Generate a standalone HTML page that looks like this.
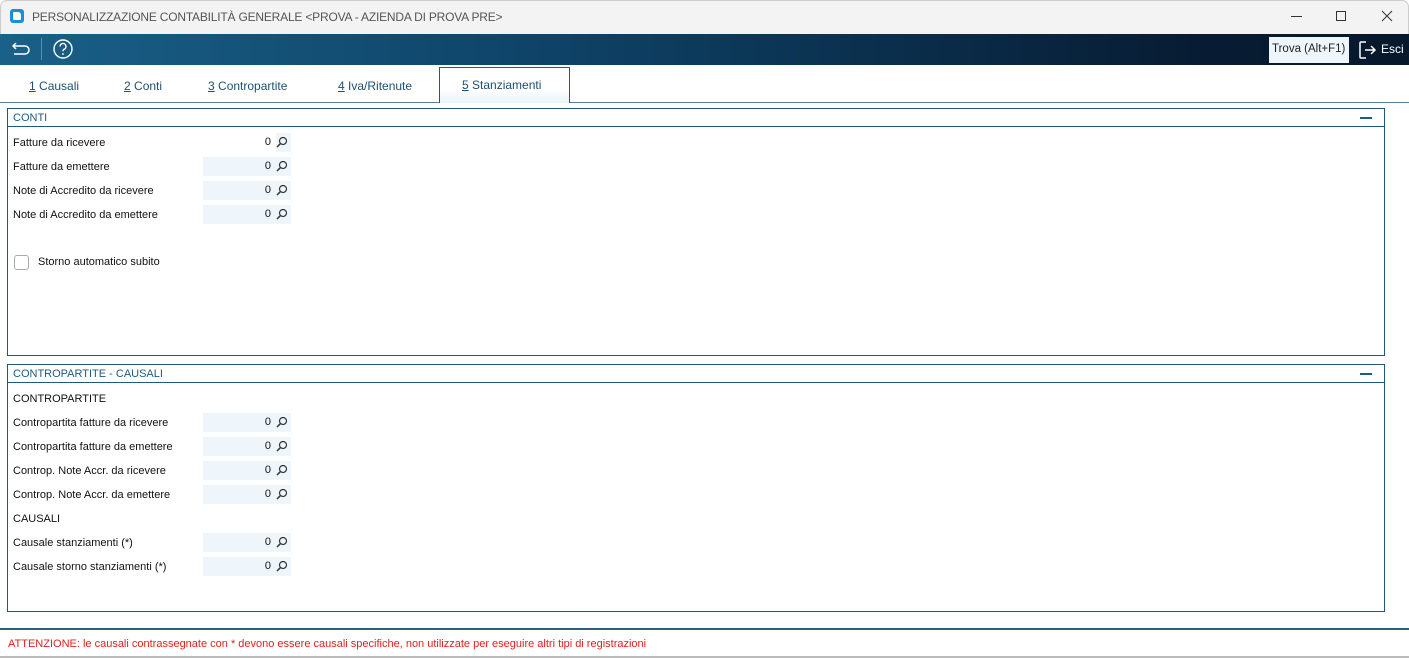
<!DOCTYPE html><html><head><meta charset="utf-8"><style>
*{margin:0;padding:0;box-sizing:border-box}
body{width:1409px;height:658px;overflow:hidden;background:#fff;font-family:"Liberation Sans",sans-serif;font-size:11px;color:#111;position:relative}
.a{position:absolute}
.title{left:0;top:0;width:1409px;height:34px;background:#f3f3f3;border:1px solid #ccc;border-bottom:none;border-radius:7px 7px 0 0}
.tb{left:0;top:34px;width:1409px;height:31px;background:linear-gradient(90deg,#1a6088 0%,#0e4266 40%,#071c33 85%,#06182b 100%)}
.tab{top:79px;font-size:12px;color:#1d4f73}
.grp{border:1px solid #1f5a7a;left:7px;width:1378px}
.gh{position:absolute;left:0;top:0;right:0;height:18px;border-bottom:1px solid #1f5a7a;color:#1d5a86;font-size:11px;padding:3px 0 0 5px}
.gh:after{content:"";position:absolute;right:12px;top:8px;width:12px;height:2px;background:#1d5a86}
.lbl{left:13px}
.fld{left:203px;width:88px;height:19px;background:#eef6fc}
.fld span{position:absolute;right:20px;top:3px}
.fld svg{position:absolute;right:3px;top:3px}
</style></head><body>
<div class="a title"></div>
<div class="a" style="left:10px;top:9px;width:14px;height:14px;background:#1a8fd8;border-radius:3px"><div style="position:absolute;left:3px;top:3px;width:8px;height:8px;background:#fff;border-radius:1px 3px 1px 1px"></div></div>
<div class="a" style="left:32px;top:10px;font-size:12px;color:#555;letter-spacing:-0.2px">PERSONALIZZAZIONE CONTABILITÀ GENERALE &lt;PROVA - AZIENDA DI PROVA PRE&gt;</div>
<div class="a" style="left:1291px;top:16px;width:11px;height:1px;background:#333"></div>
<div class="a" style="left:1336px;top:11px;width:10px;height:10px;border:1px solid #333"></div>
<svg class="a" style="left:1381px;top:10px" width="12" height="12"><path d="M1 1L11 11M11 1L1 11" stroke="#333" stroke-width="1"/></svg>
<div class="a tb"></div>
<svg class="a" style="left:11px;top:39px" width="22" height="20"><path d="M5 4L2 7L5 10M2 7H14a4 4 0 0 1 0 8H3" fill="none" stroke="#fff" stroke-width="1.5"/></svg>
<div class="a" style="left:41px;top:38px;width:1px;height:22px;background:#5f8fb0"></div>
<svg class="a" style="left:52px;top:38px" width="22" height="22"><circle cx="11" cy="11" r="9" fill="none" stroke="#fff" stroke-width="1.4"/><path d="M8 8.5a3 3 0 1 1 4 2.8c-1 .4-1 1-1 2" fill="none" stroke="#fff" stroke-width="1.4"/><circle cx="11" cy="16" r="0.9" fill="#fff"/></svg>
<div class="a" style="left:1269px;top:37px;width:80px;height:26px;background:#eef6fc;font-size:11.5px;padding:6px 0 0 3px;color:#222">Trova (Alt+F1)</div>
<svg class="a" style="left:1358px;top:40px" width="20" height="20"><path d="M8 2H3a1 1 0 0 0-1 1V17a1 1 0 0 0 1 1H8M7 10H17M13 6L17 10L13 14" fill="none" stroke="#fff" stroke-width="1.5"/></svg>
<div class="a" style="left:1381px;top:42px;color:#fff;font-size:12px">Esci</div>
<div class="a" style="left:0;top:102px;width:1409px;height:1px;background:#5d7f99"></div>
<div class="a" style="left:439px;top:67px;width:131px;height:36px;border:1px solid #1f5a7a;border-bottom:none;background:linear-gradient(#fff 60%,#e8f4fc)"></div>
<div class="a tab" style="left:29px"><u>1</u> Causali</div>
<div class="a tab" style="left:124px"><u>2</u> Conti</div>
<div class="a tab" style="left:208px"><u>3</u> Contropartite</div>
<div class="a tab" style="left:338px"><u>4</u> Iva/Ritenute</div>
<div class="a tab" style="left:462px;top:78px"><u>5</u> Stanziamenti</div>

<div class="a grp" style="top:108px;height:248px"><div class="gh">CONTI</div></div>
<div class="a grp" style="top:364px;height:248px"><div class="gh">CONTROPARTITE - CAUSALI</div></div>

<div id="f"></div>
<div class="a" style="left:14px;top:255px;width:15px;height:15px;border:1px solid #aaa;border-radius:3px"></div>
<div class="a" style="left:38px;top:256px">Storno automatico subito</div>
<div class="a" style="left:13px;top:393px">CONTROPARTITE</div>
<div class="a" style="left:13px;top:513px">CAUSALI</div>
<div class="a" style="left:0;top:628px;width:1409px;height:2px;background:#2a6080"></div>
<div class="a" style="left:8px;top:638px;color:#e02020">ATTENZIONE: le causali contrassegnate con * devono essere causali specifiche, non utilizzate per eseguire altri tipi di registrazioni</div>
<div class="a" style="left:0;top:656px;width:1409px;height:2px;background:#bbb"></div>
<script>
var r=[["Fatture da ricevere",133,1],["Fatture da emettere",157],["Note di Accredito da ricevere",181],["Note di Accredito da emettere",205],["Contropartita fatture da ricevere",413],["Contropartita fatture da emettere",437],["Controp. Note Accr. da ricevere",461],["Controp. Note Accr. da emettere",485],["Causale stanziamenti (*)",533],["Causale storno stanziamenti (*)",557]],h="";
r.forEach(function(x){h+='<div class="a lbl" style="top:'+(x[1]+4)+'px">'+x[0]+'</div><div class="a fld" style="top:'+x[1]+'px;'+(x[2]?'background:linear-gradient(90deg,#fff 73px,#eef6fc 73px)':'')+'"><span>0</span><svg width="12" height="12"><circle cx="7" cy="5" r="3.5" fill="none" stroke="#333" stroke-width="1.2"/><path d="M4.5 7.5L1 11" stroke="#333" stroke-width="1.5"/></svg></div>'});
document.getElementById("f").innerHTML=h;
</script>
</body></html>
